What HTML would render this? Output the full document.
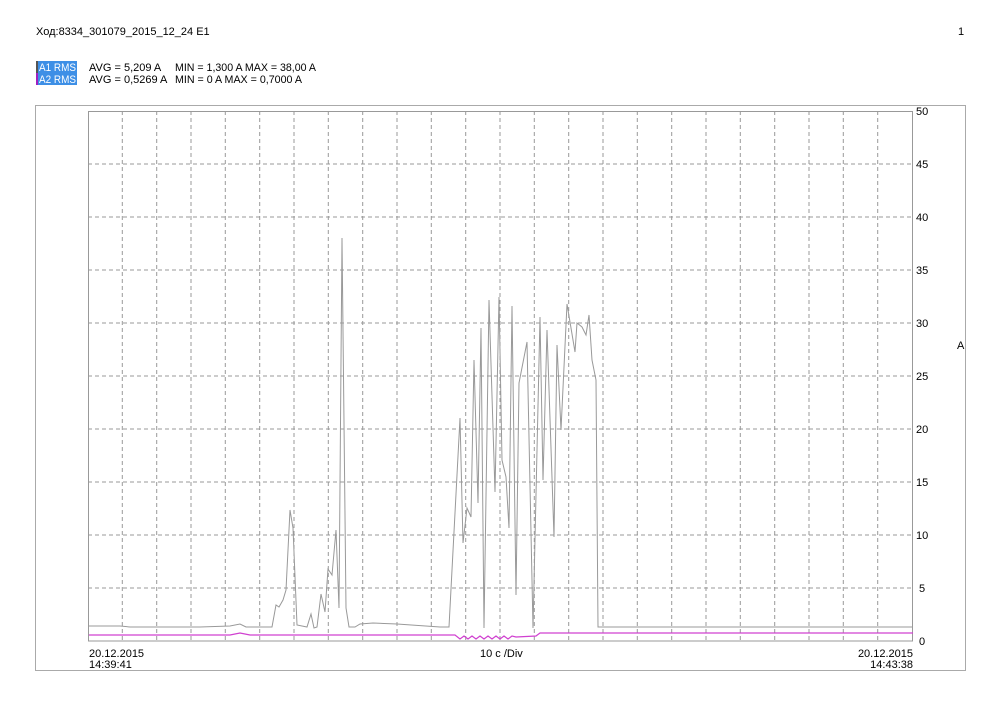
<!DOCTYPE html>
<html><head><meta charset="utf-8"><style>
html,body{margin:0;padding:0;background:#fff;}
body{width:1000px;height:706px;position:relative;overflow:hidden;font-family:"Liberation Sans",Arial,sans-serif;}
svg{position:absolute;left:0;top:0;}
</style></head><body>
<svg width="1000" height="706" viewBox="0 0 1000 706" font-family="Liberation Sans, Arial, sans-serif">
<text x="36" y="35" font-size="11" fill="#000">Ход:8334_301079_2015_12_24 E1</text>
<text x="958" y="35" font-size="11" fill="#000">1</text>
<rect x="36" y="61" width="41" height="24" fill="#3d8fe6"/>
<rect x="36" y="61" width="2" height="12" fill="#555"/>
<rect x="36" y="73" width="2" height="12" fill="#a020c0"/>
<text x="39" y="71" font-size="11" fill="#fff" textLength="37" lengthAdjust="spacingAndGlyphs">A1 RMS</text>
<text x="39" y="83" font-size="11" fill="#fff" textLength="37" lengthAdjust="spacingAndGlyphs">A2 RMS</text>
<text x="89" y="71" font-size="11" fill="#000">AVG = 5,209 A</text>
<text x="175" y="71" font-size="11" fill="#000" textLength="141" lengthAdjust="spacingAndGlyphs">MIN = 1,300 A MAX = 38,00 A</text>
<text x="89" y="83" font-size="11" fill="#000">AVG = 0,5269 A</text>
<text x="175" y="83" font-size="11" fill="#000" textLength="127" lengthAdjust="spacingAndGlyphs">MIN = 0 A MAX = 0,7000 A</text>
<rect x="35.5" y="105.5" width="930" height="565" fill="none" stroke="#aaa" stroke-width="1"/>
<g stroke="#999" stroke-width="1" stroke-dasharray="4,3" fill="none">
<path d="M122.3 111V641M156.7 111V641M191 111V641M225.3 111V641M259.7 111V641M294 111V641M328.3 111V641M362.7 111V641M397 111V641M431.3 111V641M465.7 111V641M500 111V641M534.3 111V641M568.7 111V641M603 111V641M637.3 111V641M671.7 111V641M706 111V641M740.3 111V641M774.7 111V641M809 111V641M843.3 111V641M877.7 111V641"/>
<path d="M88 164H913M88 217H913M88 270H913M88 323H913M88 376H913M88 429H913M88 482H913M88 535H913M88 588H913M88 641H913"/>
</g>
<rect x="88.5" y="111.5" width="824" height="529.5" fill="none" stroke="#999" stroke-width="1"/>
<g font-size="11" fill="#000">
<text x="916" y="115">50</text><text x="916" y="168">45</text><text x="916" y="221">40</text>
<text x="916" y="274">35</text><text x="916" y="327">30</text><text x="916" y="380">25</text>
<text x="916" y="433">20</text><text x="916" y="486">15</text><text x="916" y="539">10</text>
<text x="919" y="592">5</text><text x="919" y="645">0</text>
<text x="957" y="349">A</text>
<text x="89" y="657">20.12.2015</text><text x="89" y="668">14:39:41</text>
<text x="480" y="657">10 c /Div</text>
<text x="913" y="657" text-anchor="end">20.12.2015</text><text x="913" y="668" text-anchor="end">14:43:38</text>
</g>
<polyline fill="none" stroke="#999" stroke-width="1" points="89,626 120,626 130,627 200,627 230,626 240,624 246,627 272,627 276,605 279,607 283,600 286,590 290,510 293,528 297,625 307,627 311,614 314,628 317,627 321,594 325,612 328,569 332,575 336,530 339,608 342,238 346,608 349,627 355,627 360,624 373,623 397,624 440,627 449,627 460,418 463,543 467,508 471,517 474,360 478,503 481,328 484,628 489,300 495,492 499,297 502,460 506,477 509,528 512,306 516,595 519,383 527,342 533,628 540,317 543,480 547,330 554,537 557,345 561,430 567,304 575,352 577,323 582,327 586,335 589,315 592,360 596,380 598,627 913,627"/>
<polyline fill="none" stroke="#d040d0" stroke-width="1.2" points="89,635 230,635 240,633 250,635 440,635 455,635 460,639 464,636 468,639 472,636 476,639 480,636 484,639 488,636 492,639 496,636 500,639 504,636 508,639 512,636 516,637 536,636 540,633 913,633"/>
</svg>
</body></html>
